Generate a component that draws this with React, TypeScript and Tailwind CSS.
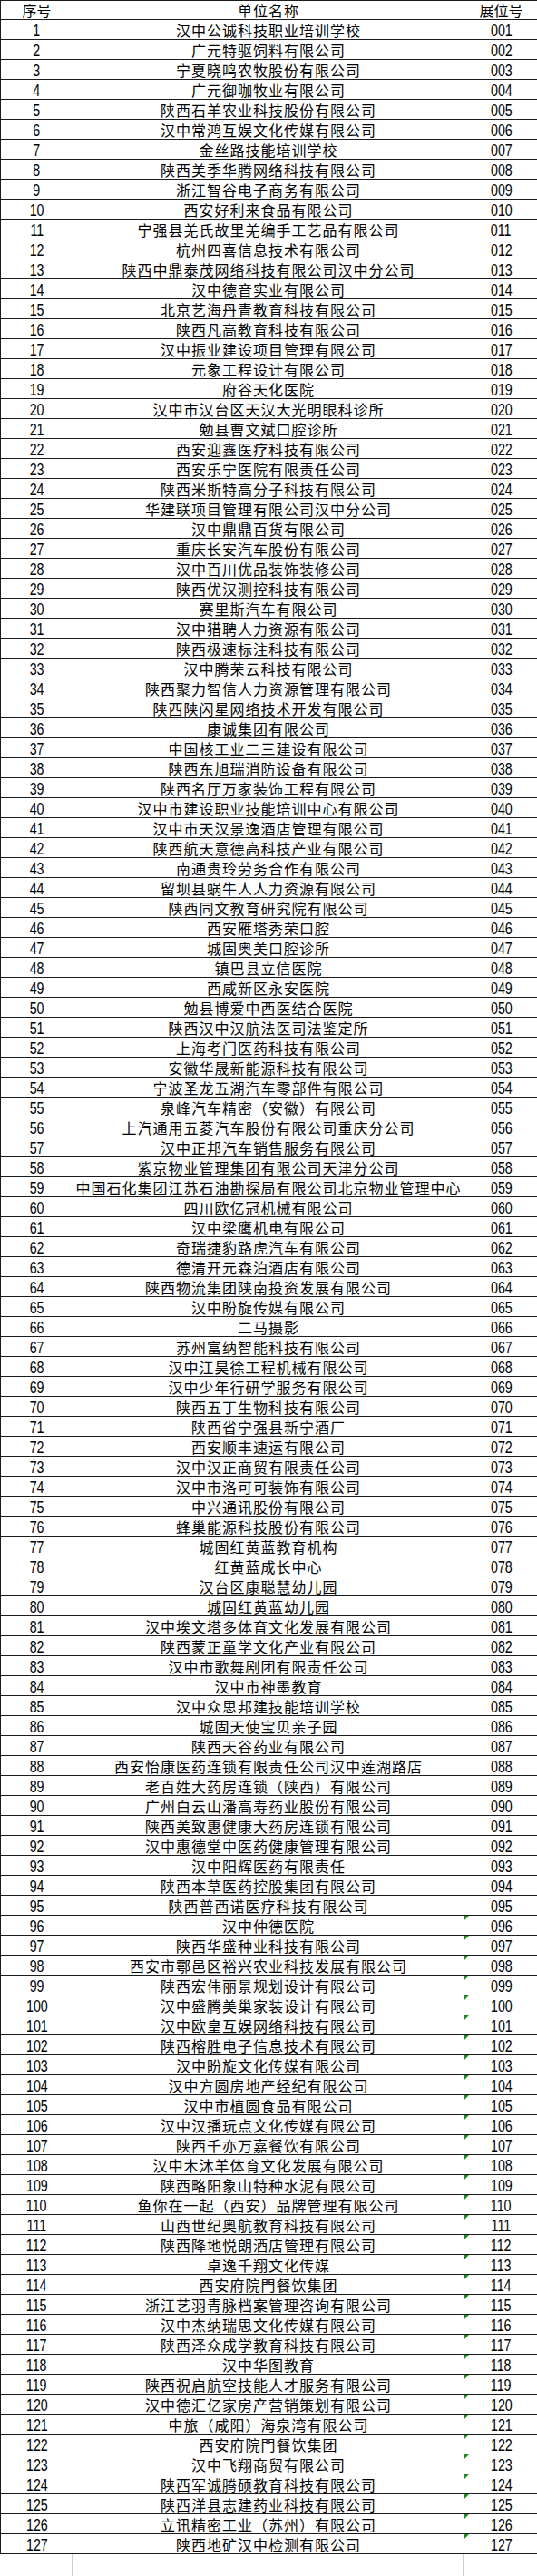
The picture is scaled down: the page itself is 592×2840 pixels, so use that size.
import React from "react";

// 展位表：序号 / 单位名称 / 展位号
const names: string[] = [
  "汉中公诚科技职业培训学校",
  "广元特驱饲料有限公司",
  "宁夏晓鸣农牧股份有限公司",
  "广元御咖牧业有限公司",
  "陕西石羊农业科技股份有限公司",
  "汉中常鸿互娱文化传媒有限公司",
  "金丝路技能培训学校",
  "陕西美季华腾网络科技有限公司",
  "浙江智谷电子商务有限公司",
  "西安好利来食品有限公司",
  "宁强县羌氏故里羌编手工艺品有限公司",
  "杭州四喜信息技术有限公司",
  "陕西中鼎泰茂网络科技有限公司汉中分公司",
  "汉中德音实业有限公司",
  "北京艺海丹青教育科技有限公司",
  "陕西凡高教育科技有限公司",
  "汉中振业建设项目管理有限公司",
  "元象工程设计有限公司",
  "府谷天化医院",
  "汉中市汉台区天汉大光明眼科诊所",
  "勉县曹文斌口腔诊所",
  "西安迎鑫医疗科技有限公司",
  "西安乐宁医院有限责任公司",
  "陕西米斯特高分子科技有限公司",
  "华建联项目管理有限公司汉中分公司",
  "汉中鼎鼎百货有限公司",
  "重庆长安汽车股份有限公司",
  "汉中百川优品装饰装修公司",
  "陕西优汉测控科技有限公司",
  "赛里斯汽车有限公司",
  "汉中猎聘人力资源有限公司",
  "陕西极速标注科技有限公司",
  "汉中腾荣云科技有限公司",
  "陕西聚力智信人力资源管理有限公司",
  "陕西陕闪星网络技术开发有限公司",
  "康诚集团有限公司",
  "中国核工业二三建设有限公司",
  "陕西东旭瑞消防设备有限公司",
  "陕西名厅万家装饰工程有限公司",
  "汉中市建设职业技能培训中心有限公司",
  "汉中市天汉景逸酒店管理有限公司",
  "陕西航天意德高科技产业有限公司",
  "南通贵玲劳务合作有限公司",
  "留坝县蜗牛人人力资源有限公司",
  "陕西同文教育研究院有限公司",
  "西安雁塔秀荣口腔",
  "城固奥美口腔诊所",
  "镇巴县立信医院",
  "西咸新区永安医院",
  "勉县博爱中西医结合医院",
  "陕西汉中汉航法医司法鉴定所",
  "上海考门医药科技有限公司",
  "安徽华晟新能源科技有限公司",
  "宁波圣龙五湖汽车零部件有限公司",
  "泉峰汽车精密（安徽）有限公司",
  "上汽通用五菱汽车股份有限公司重庆分公司",
  "汉中正邦汽车销售服务有限公司",
  "紫京物业管理集团有限公司天津分公司",
  "中国石化集团江苏石油勘探局有限公司北京物业管理中心",
  "四川欧亿冠机械有限公司",
  "汉中梁鹰机电有限公司",
  "奇瑞捷豹路虎汽车有限公司",
  "德清开元森泊酒店有限公司",
  "陕西物流集团陕南投资发展有限公司",
  "汉中盼旋传媒有限公司",
  "二马摄影",
  "苏州富纳智能科技有限公司",
  "汉中江昊徐工程机械有限公司",
  "汉中少年行研学服务有限公司",
  "陕西五丁生物科技有限公司",
  "陕西省宁强县新宁酒厂",
  "西安顺丰速运有限公司",
  "汉中汉正商贸有限责任公司",
  "汉中市洛可可装饰有限公司",
  "中兴通讯股份有限公司",
  "蜂巢能源科技股份有限公司",
  "城固红黄蓝教育机构",
  "红黄蓝成长中心",
  "汉台区康聪慧幼儿园",
  "城固红黄蓝幼儿园",
  "汉中埃文塔多体育文化发展有限公司",
  "陕西蒙正童学文化产业有限公司",
  "汉中市歌舞剧团有限责任公司",
  "汉中市神墨教育",
  "汉中众思邦建技能培训学校",
  "城固天使宝贝亲子园",
  "陕西天谷药业有限公司",
  "西安怡康医药连锁有限责任公司汉中莲湖路店",
  "老百姓大药房连锁（陕西）有限公司",
  "广州白云山潘高寿药业股份有限公司",
  "陕西美致惠健康大药房连锁有限公司",
  "汉中惠德堂中医药健康管理有限公司",
  "汉中阳辉医药有限责任",
  "陕西本草医药控股集团有限公司",
  "陕西普西诺医疗科技有限公司",
  "汉中仲德医院",
  "陕西华盛种业科技有限公司",
  "西安市鄠邑区裕兴农业科技发展有限公司",
  "陕西宏伟丽景规划设计有限公司",
  "汉中盛腾美巢家装设计有限公司",
  "汉中欧皇互娱网络科技有限公司",
  "陕西榕胜电子信息技术有限公司",
  "汉中盼旋文化传媒有限公司",
  "汉中方圆房地产经纪有限公司",
  "汉中市植圆食品有限公司",
  "汉中汉播玩点文化传媒有限公司",
  "陕西千亦万嘉餐饮有限公司",
  "汉中木沐羊体育文化发展有限公司",
  "陕西略阳象山特种水泥有限公司",
  "鱼你在一起（西安）品牌管理有限公司",
  "山西世纪奥航教育科技有限公司",
  "陕西降地悦朗酒店管理有限公司",
  "卓逸千翔文化传媒",
  "西安府院門餐饮集团",
  "浙江艺羽青脉档案管理咨询有限公司",
  "汉中杰纳瑞思文化传媒有限公司",
  "陕西泽众成学教育科技有限公司",
  "汉中华图教育",
  "陕西祝启航空技能人才服务有限公司",
  "汉中德汇亿家房产营销策划有限公司",
  "中旅（咸阳）海泉湾有限公司",
  "西安府院門餐饮集团",
  "汉中飞翔商贸有限公司",
  "陕西军诚腾硕教育科技有限公司",
  "陕西洋县志建药业科技有限公司",
  "立讯精密工业（苏州）有限公司",
  "陕西地矿汉中检测有限公司",
];

const cjk = { fontFamily: '"Noto Sans CJK SC", "Noto Sans", sans-serif' };
const num = { fontFamily: '"Liberation Sans Narrow", "Liberation Sans", sans-serif' };

const Digits = ({ value }: { value: string }) => (
  <span className="inline-block scale-x-75 text-[19px] leading-[19px]" style={num}>
    {value}
  </span>
);

const Row = ({ index, name, header }: { index: number; name: string; header?: boolean }) => {
  const booth = String(index).padStart(3, "0");
  // Excel 的“文本格式数字”绿色小三角，从 96 行开始出现
  const flagged = !header && index >= 96;

  return (
    <div
      className={`grid h-[22px] grid-cols-[80px_431px_81px] border-b border-l border-[#1c1c1c] ${
        header ? "border-t" : ""
      }`}
    >
      <div className="flex items-end justify-center border-r border-[#1c1c1c]">
        {header ? (
          <span className="text-[16px] leading-[19px]" style={cjk}>序号</span>
        ) : (
          <Digits value={String(index)} />
        )}
      </div>
      <div className="flex items-end justify-center whitespace-nowrap border-r border-[#1c1c1c]">
        <span className="text-[16px] leading-[19px] tracking-[1px] text-black" style={cjk}>
          {header ? "单位名称" : name}
        </span>
      </div>
      <div className="relative flex items-end justify-center">
        {flagged && (
          <span className="absolute left-0 top-0 h-0 w-0 border-r-[5px] border-t-[5px] border-r-transparent border-t-[#1f8a1f]" />
        )}
        {header ? (
          <span className="text-[16px] leading-[19px]" style={cjk}>展位号</span>
        ) : (
          <Digits value={booth} />
        )}
      </div>
    </div>
  );
};

export default function App() {
  return (
    <div className="h-[2840px] w-[592px] overflow-hidden bg-white text-black">
      <Row index={0} name="" header />
      {names.map((n, i) => (
        <Row key={i} index={i + 1} name={n} />
      ))}
      {/* 表格下方的空白网格线 */}
      <div className="grid h-[24px] grid-cols-[80px_431px_81px]">
        <div className="border-r border-[#c6cedb]" />
        <div className="border-r border-[#c6cedb]" />
        <div />
      </div>
    </div>
  );
}
